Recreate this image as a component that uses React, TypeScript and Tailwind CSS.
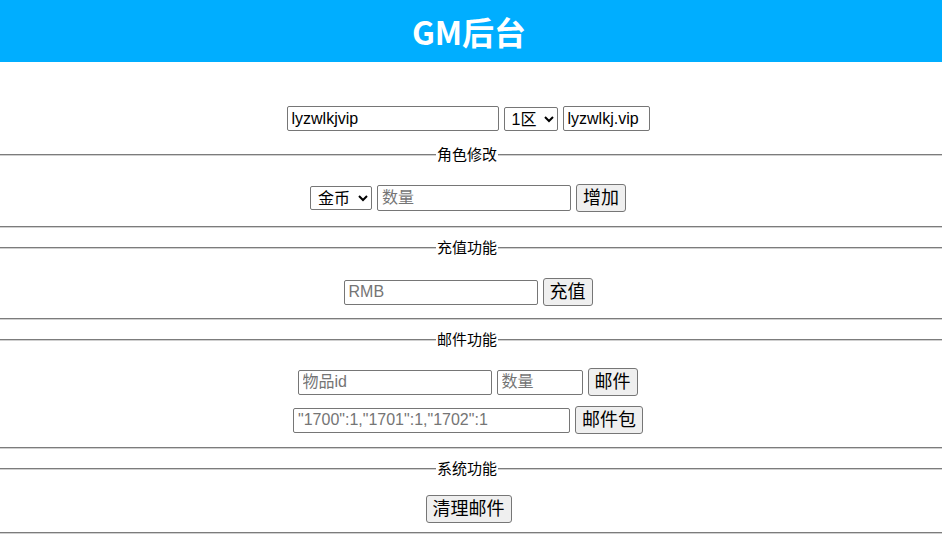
import React from 'react'

const inputCls =
  'h-[25px] border border-[#767676] rounded-[2px] px-[4px] text-[16px] text-black placeholder:text-[#757575] bg-white outline-none'
const btnCls =
  'h-[28px] border border-[#767676] rounded-[3px] bg-[#efefef] px-[6px] text-[18px] leading-none text-black'
const selectCls =
  'h-[24px] border border-[#767676] rounded-[2px] bg-white text-[16px] text-black pl-[3px]'

function Section({
  title,
  pad,
  children,
}: {
  title: string
  pad: string
  children: React.ReactNode
}) {
  return (
    <fieldset className={`border-y-2 border-x-0 [border-style:groove] border-[#d0d0d0] ${pad}`}>
      <legend className="ml-[calc(50%-35px)] px-[1px] text-[15px] leading-[20px] text-black">
        {title}
      </legend>
      {children}
    </fieldset>
  )
}

export default function App() {
  return (
    <div
      className="w-[942px] h-[538px] bg-white overflow-hidden"
      style={{ fontFamily: '"Liberation Sans", "Noto Sans CJK SC", sans-serif' }}
    >
      {/* header */}
      <div className="h-[62px] bg-[#00aeff] flex items-center justify-center">
        <h1
          className="text-white text-[32px] font-bold pr-[4px]"
          style={{ fontFamily: '"Noto Sans CJK SC", sans-serif' }}
        >
          GM后台
        </h1>
      </div>

      <div className="flex justify-center gap-[5px] pt-[44px] pr-[6px]">
        <input className={`${inputCls} w-[212px]`} defaultValue="lyzwlkjvip" />
        <select className={`${selectCls} w-[54px] mt-[1px]`} defaultValue="1">
          <option value="1">1区</option>
        </select>
        <input className={`${inputCls} w-[87px]`} defaultValue="lyzwlkj.vip" />
      </div>

      <div className="mt-[14px] flex flex-col gap-[10px]">
        <Section title="角色修改" pad="pt-[19px] pb-[14px]">
          <div className="flex justify-center items-center gap-[5px] pr-[6px]">
            <select className={`${selectCls} w-[62px]`} defaultValue="gold">
              <option value="gold">金币</option>
            </select>
            <input className={`${inputCls} w-[194px] h-[26px]`} placeholder="数量" />
            <button className={btnCls}>增加</button>
          </div>
        </Section>

        <Section title="充值功能" pad="pt-[20px] pb-[12px]">
          <div className="flex justify-center items-center gap-[5px] pr-[6px]">
            <input className={`${inputCls} w-[194px]`} placeholder="RMB" />
            <button className={btnCls}>充值</button>
          </div>
        </Section>

        <Section title="邮件功能" pad="pt-[18px] pb-[13px]">
          <div className="flex flex-col items-center gap-[10px]">
            <div className="flex items-center gap-[5px] pr-[7px]">
              <input className={`${inputCls} w-[194px]`} placeholder="物品id" />
              <input className={`${inputCls} w-[86px]`} placeholder="数量" />
              <button className={btnCls}>邮件</button>
            </div>
            <div className="flex items-center gap-[5px] pr-[6px]">
              <input
                className={`${inputCls} w-[277px] text-[15.5px]`}
                placeholder={'"1700":1,"1701":1,"1702":1'}
              />
              <button className={btnCls}>邮件包</button>
            </div>
          </div>
        </Section>

        <Section title="系统功能" pad="pt-[16px] pb-[9px]">
          <div className="flex justify-center pr-[5px]">
            <button className={`${btnCls} h-[27px] px-[5px]`}>清理邮件</button>
          </div>
        </Section>
      </div>
    </div>
  )
}
